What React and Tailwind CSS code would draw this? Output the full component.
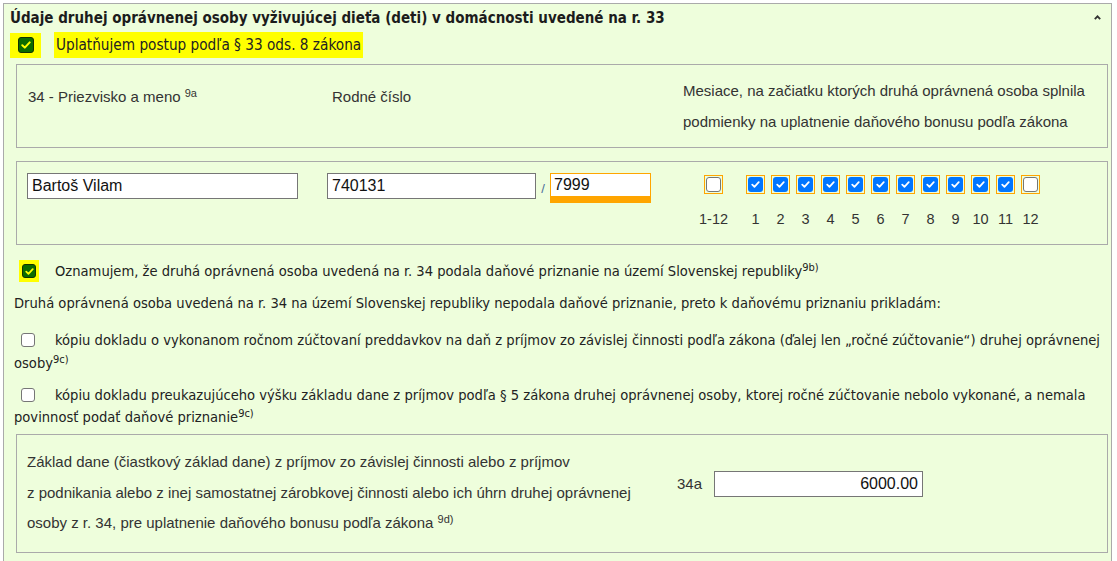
import React from "react";

const T = "font-['DejaVu_Sans_Condensed','DejaVu_Sans',sans-serif]";
const A = "font-['Liberation_Sans',Arial,sans-serif]";

function Check({ color, w = 10, h = 8 }) {
  return (
    <svg width={w} height={h} viewBox="0 0 10 8" fill="none">
      <path d="M1.3 4.2 L3.8 6.6 L8.7 1.4" stroke={color} strokeWidth="2" strokeLinecap="round" strokeLinejoin="round" />
    </svg>
  );
}

function HiCheck({ big }) {
  return big ? (
    <span className="inline-flex items-center justify-center bg-[#ffff00] w-[31px] h-[25px]">
      <span className="flex items-center justify-center w-[16px] h-[16px] rounded-[3px] bg-[#0b6b00] border border-[#113300]">
        <Check color="#ffff00" />
      </span>
    </span>
  ) : (
    <span className="inline-flex items-center justify-center bg-[#ffff00] w-[20px] h-[22px]">
      <span className="flex items-center justify-center w-[14px] h-[14px] rounded-[3px] bg-[#0b6b00] border border-[#113300]">
        <Check color="#ffff00" w={9} h={7} />
      </span>
    </span>
  );
}

function MonthBox({ checked }) {
  return (
    <span className="flex items-center justify-center w-[19px] h-[19px] border border-[#ffa500]">
      {checked ? (
        <span className="flex items-center justify-center w-[15px] h-[15px] rounded-[3px] bg-[#0075ff]">
          <Check color="#ffffff" w={9} h={7} />
        </span>
      ) : (
        <span className="w-[15px] h-[15px] rounded-[3px] bg-white border border-[#767676]" />
      )}
    </span>
  );
}

function PlainBox() {
  return <span className="inline-block w-[14px] h-[14px] rounded-[3px] bg-white border border-[#767676] align-[-2px] ml-[7px] mr-[20px]" />;
}

export default function App() {
  const months = [1, 2, 3, 4, 5, 6, 7, 8, 9, 10, 11, 12];
  return (
    <div className="w-[1117px] h-[561px] overflow-hidden bg-white">
      <div className="ml-[3px] mt-[3px] w-[1109px] h-[620px] border border-[#aaaaaa] bg-[#eefedc] text-[#222]">
        {/* heading */}
        <div className="flex items-center justify-between h-[28px] pl-[6px] pr-[10px]">
          <div className={`${T} font-bold text-[15px] leading-[20px] text-[#1c1c1c]`}>
            Údaje druhej oprávnenej osoby vyživujúcej dieťa (deti) v domácnosti uvedené na r. 33
          </div>
          <svg width="7" height="5" viewBox="0 0 7 5" className="mt-[-2px]">
            <path d="M0.8 4.2 L3.5 1.3 L6.2 4.2" stroke="#333" strokeWidth="1.8" fill="none" />
          </svg>
        </div>

        {/* uplatnujem */}
        <div className="flex items-center h-[26px] ml-[6px]">
          <HiCheck big />
          <span className={`${T} ml-[13px] bg-[#ffff00] px-[2px] h-[26px] flex items-center text-[15.2px]`}>
            Uplatňujem postup podľa § 33 ods. 8 zákona
          </span>
        </div>

        {/* box 1 */}
        <div className={`${A} mt-[6px] ml-[12px] w-[1092px] h-[84px] border border-[#aaaaaa] flex text-[15px] text-[#333]`}>
          <div className="w-[315px] pl-[11px] pt-[22px] leading-[20px]">
            34 - Priezvisko a meno <sup className="text-[11px] leading-none">9a</sup>
          </div>
          <div className="w-[351px] pt-[22px] leading-[20px]">Rodné číslo</div>
          <div className="pt-[10px] leading-[31px]">
            Mesiace, na začiatku ktorých druhá oprávnená osoba splnila
            <br />
            podmienky na uplatnenie daňového bonusu podľa zákona
          </div>
        </div>

        {/* box 2 */}
        <div className={`${A} mt-[13px] ml-[12px] w-[1092px] h-[84px] border border-[#aaaaaa] flex items-start pt-[11px] pl-[10px] text-[14.5px] text-[#333]`}>
          <div className="w-[271px] h-[26px] bg-white border border-[#767676] flex items-center pl-[4px] text-[16px] text-[#111]">
            Bartoš Vilam
          </div>
          <div className="ml-[29px] w-[209px] h-[26px] bg-white border border-[#767676] flex items-center pl-[4px] text-[16px] text-[#111]">
            740131
          </div>
          <div className="w-[14px] h-[26px] flex items-end justify-center pb-[1px] text-[#4a6a9a] text-[13px]">/</div>
          <div className="w-[101px] h-[30px] bg-white border border-[#ffa500] border-b-[7px] flex items-center pl-[3px] text-[16px] text-[#111]">
            7999
          </div>
          <div className="ml-[47px] flex items-start">
            <div className="w-[31px] flex flex-col items-center pt-[2px]">
              <MonthBox checked={false} />
              <span className="mt-[15px] leading-[20px]">1-12</span>
            </div>
            <div className="ml-[14px] flex">
              {months.map((m) => (
                <div key={m} className="w-[25px] flex flex-col items-center pt-[2px]">
                  <MonthBox checked={m !== 12} />
                  <span className="mt-[15px] leading-[20px]">{m}</span>
                </div>
              ))}
            </div>
          </div>
        </div>

        {/* oznamujem */}
        <div className={`${T} text-[14.6px] text-[#222]`}>
          <div className="mt-[15px] flex items-center h-[22px] ml-[15px]">
            <HiCheck />
            <span className="ml-[16px]">
              Oznamujem, že druhá oprávnená osoba uvedená na r. 34 podala daňové priznanie na území Slovenskej republiky
              <sup className="text-[11px] leading-none">9b)</sup>
            </span>
          </div>
          <p className="mt-[10px] pl-[10px] leading-[22px]">
            Druhá oprávnená osoba uvedená na r. 34 na území Slovenskej republiky nepodala daňové priznanie, preto k daňovému priznaniu prikladám:
          </p>
          <p className="mt-[14px] pl-[10px] pr-[2px] leading-[23px]">
            <PlainBox />
            kópiu dokladu o vykonanom ročnom zúčtovaní preddavkov na daň z príjmov zo závislej činnosti podľa zákona (ďalej len „ročné zúčtovanie“) druhej oprávnenej osoby
            <sup className="text-[11px] leading-none">9c)</sup>
          </p>
          <p className="mt-[10px] pl-[10px] pr-[2px] leading-[22px]">
            <PlainBox />
            kópiu dokladu preukazujúceho výšku základu dane z príjmov podľa § 5 zákona druhej oprávnenej osoby, ktorej ročné zúčtovanie nebolo vykonané, a nemala povinnosť podať daňové priznanie
            <sup className="text-[11px] leading-none">9c)</sup>
          </p>
        </div>

        {/* box 3 */}
        <div className={`${A} mt-[6px] ml-[12px] w-[1092px] h-[119px] border border-[#aaaaaa] flex items-start pl-[10px] text-[15px] text-[#333]`}>
          <div className="w-[650px] pt-[12px] leading-[30.5px]">
            Základ dane (čiastkový základ dane) z príjmov zo závislej činnosti alebo z príjmov
            <br />
            z podnikania alebo z inej samostatnej zárobkovej činnosti alebo ich úhrn druhej oprávnenej
            <br />
            osoby z r. 34, pre uplatnenie daňového bonusu podľa zákona <sup className="text-[11px] leading-none">9d)</sup>
          </div>
          <div className="mt-[36px] flex items-center">
            <span className="w-[37px] leading-[20px]">34a</span>
            <div className="w-[209px] h-[26px] bg-white border border-[#767676] flex items-center justify-end pr-[4px] text-[16px] text-[#111]">
              6000.00
            </div>
          </div>
        </div>
      </div>
    </div>
  );
}
